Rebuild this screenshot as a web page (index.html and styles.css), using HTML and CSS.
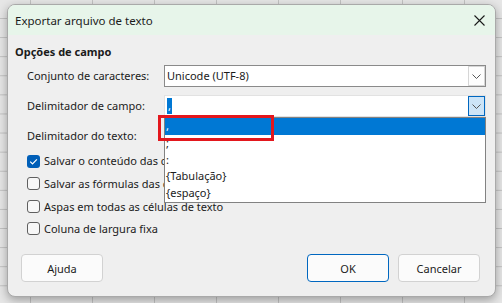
FILE: index.html
```html
<!DOCTYPE html>
<html lang="pt-BR">
<head>
<meta charset="utf-8">
<title>Exportar arquivo de texto</title>
<link rel="stylesheet" href="styles.css">
</head>
<body>
<div class="dialog">
  <div class="titlebar">
    <span class="title">Exportar arquivo de texto</span>
    <svg class="close" width="11" height="11" viewBox="0 0 11 11"><path d="M0.5 0.5 L10.5 10.5 M10.5 0.5 L0.5 10.5" stroke="#1a1a1a" stroke-width="1.1" fill="none"/></svg>
  </div>
  <div class="content">
    <div class="heading">Opções de campo</div>
    <div class="form">
      <div class="label">Conjunto de caracteres:</div>
      <div class="combo">
        <span class="value">Unicode (UTF-8)</span>
        <span class="btn"><svg width="9" height="5" viewBox="0 0 9 5"><polyline points="0.5,0.5 4.5,4.5 8.5,0.5" fill="none" stroke="#555" stroke-width="1"/></svg></span>
      </div>
      <div class="label">Delimitador de campo:</div>
      <div class="combo combo-open">
        <span class="value"><span class="sel">,</span></span>
        <span class="btn btn-active"><svg width="9" height="5" viewBox="0 0 9 5"><polyline points="0.5,0.5 4.5,4.5 8.5,0.5" fill="none" stroke="#555" stroke-width="1"/></svg></span>
        <ul class="list">
          <li class="selected">,</li>
          <li>;</li>
          <li>:</li>
          <li>{Tabulação}</li>
          <li>{espaço}</li>
        </ul>
        <div class="annot"></div>
      </div>
      <div class="label">Delimitador do texto:</div>
      <div class="combo">
        <span class="value"></span>
        <span class="btn"><svg width="9" height="5" viewBox="0 0 9 5"><polyline points="0.5,0.5 4.5,4.5 8.5,0.5" fill="none" stroke="#555" stroke-width="1"/></svg></span>
      </div>
    </div>
    <div class="checks">
      <div class="check-row"><span class="box box-on"><svg width="13" height="13" viewBox="0 0 13 13"><path d="M3.2 6.6 L5.5 8.9 L9.9 4.3" fill="none" stroke="#fff" stroke-width="1.2"/></svg></span><span class="clip">Salvar o conteúdo das células como mostrado</span></div>
      <div class="check-row"><span class="box"></span><span class="clip">Salvar as fórmulas das células em vez dos valores calculados</span></div>
      <div class="check-row"><span class="box"></span><span>Aspas em todas as células de texto</span></div>
      <div class="check-row"><span class="box"></span><span>Coluna de largura fixa</span></div>
    </div>
    <div class="footer">
      <button class="button">Ajuda</button>
      <span class="spacer"></span>
      <button class="button button-default">OK</button>
      <button class="button">Cancelar</button>
    </div>
  </div>
</div>
</body>
</html>
```
FILE: styles.css
```css
html, body {
  margin: 0;
}
body {
  width: 502px;
  height: 303px;
  overflow: hidden;
  box-sizing: border-box;
  padding: 4px 0 0 7px;
  background-color: #e6e6e6;
  background-image:
    linear-gradient(to right, #c2c2c2 1px, transparent 1px),
    linear-gradient(to bottom, #c2c2c2 1px, transparent 1px);
  background-size: 62px 19.1px, 62px 19.1px;
  background-position: 30px 0, 0 18px;
  font-family: "Noto Sans", "Open Sans", sans-serif;
  font-size: 11px;
  color: #1b1b1b;
}
.dialog {
  width: 489px;
  height: 293px;
  box-sizing: border-box;
  border: 1px solid #a9a9a9;
  border-radius: 8px;
  background: #efefef;
  box-shadow: 0 3px 10px rgba(0, 0, 0, 0.32);
  display: flex;
  flex-direction: column;
  overflow: hidden;
}
.titlebar {
  height: 30px;
  flex: none;
  background: #e7f5ea;
  display: flex;
  align-items: center;
  justify-content: space-between;
  padding: 0 10px 0 7px;
}
.title {
  font-size: 11.5px;
}
.close {
  display: block;
}
.content {
  flex: 1;
  display: flex;
  flex-direction: column;
  padding: 9px 8px 14px 7px;
  position: relative;
}
.heading {
  font-weight: bold;
  line-height: 16px;
  height: 16px;
}
.form {
  margin-top: 5px;
  padding-left: 12px;
  display: grid;
  grid-template-columns: 137px 322px;
  grid-auto-rows: 22px;
  row-gap: 8px;
  align-items: center;
}
.label {
  line-height: 16px;
}
.combo {
  position: relative;
  height: 22px;
  box-sizing: border-box;
  border: 1px solid #8a8a8a;
  background: #fff;
  display: flex;
  align-items: center;
}
.combo-open {
  border-color: #e2e2e2;
}
.value {
  padding-left: 2px;
  line-height: 16px;
}
.sel {
  display: inline-block;
  background: #0078d4;
  color: #fff;
  padding: 0 1px;
  line-height: 16px;
}
.btn {
  margin-left: auto;
  width: 17px;
  height: 20px;
  box-sizing: border-box;
  border: 1px solid #d6d6d6;
  background: #fdfdfd;
  display: flex;
  align-items: center;
  justify-content: center;
}
.btn-active {
  background: #cce4f7;
  border-color: #0067c0;
}
.list {
  position: absolute;
  top: 21px;
  left: -1px;
  width: 322px;
  box-sizing: border-box;
  margin: 0;
  padding: 0;
  list-style: none;
  background: #fff;
  border: 1px solid #828282;
  z-index: 5;
}
.list li {
  height: 16.8px;
  line-height: 16.8px;
  padding-left: 1px;
}
.list li.selected {
  background: #0078d4;
  color: #fff;
}
.annot {
  position: absolute;
  left: -7px;
  top: 19px;
  width: 116px;
  height: 26px;
  box-sizing: border-box;
  border: 3px solid #e3171d;
  z-index: 6;
}
.checks {
  margin-top: 3px;
  padding-left: 12px;
  display: flex;
  flex-direction: column;
}
.check-row {
  height: 22.5px;
  display: flex;
  align-items: center;
  gap: 4px;
  white-space: nowrap;
}
.clip {
  display: block;
  width: 120px;
  overflow: hidden;
  line-height: 16px;
}
.box {
  width: 13px;
  height: 13px;
  box-sizing: border-box;
  border: 1px solid #5f5f5f;
  border-radius: 3px;
  background: #f7f7f7;
  flex: none;
  display: block;
}
.box-on {
  border: none;
  background: #005fb8;
}
.box-on svg {
  display: block;
}
.footer {
  margin-top: auto;
  margin-left: 6px;
  margin-right: 7px;
  display: flex;
  gap: 9px;
}
.spacer {
  flex: 1;
}
.button {
  width: 82px;
  height: 28px;
  box-sizing: border-box;
  border: 1px solid #d2d2d2;
  border-radius: 4px;
  background: #fbfbfb;
  font-family: inherit;
  font-size: 11px;
  color: #1b1b1b;
  padding: 0;
}
.button-default {
  border-color: #0067c0;
}
```
